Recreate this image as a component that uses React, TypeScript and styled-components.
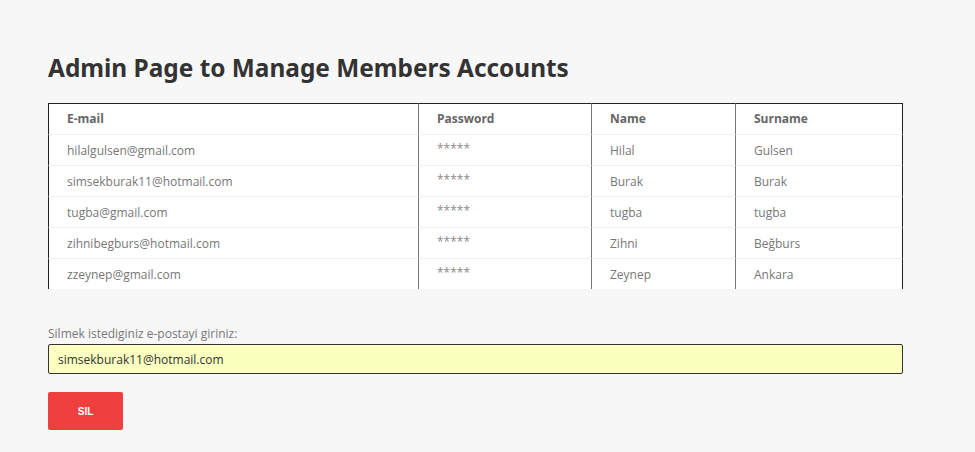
import React, { useState } from "react";
import styled, { createGlobalStyle } from "styled-components";

const GlobalStyle = createGlobalStyle`
  html, body {
    margin: 0;
    padding: 0;
    background: #f7f7f7;
    font-family: "Open Sans", "Noto Sans", sans-serif;
  }
`;

const members = [
  { email: "hilalgulsen@gmail.com", name: "Hilal", surname: "Gulsen" },
  { email: "simsekburak11@hotmail.com", name: "Burak", surname: "Burak" },
  { email: "tugba@gmail.com", name: "tugba", surname: "tugba" },
  { email: "zihnibegburs@hotmail.com", name: "Zihni", surname: "Beğburs" },
  { email: "zzeynep@gmail.com", name: "Zeynep", surname: "Ankara" },
];

function App() {
  const [email, setEmail] = useState("simsekburak11@hotmail.com");

  return (
    <>
      <GlobalStyle />
      <Page>
        <Title>Admin Page to Manage Members Accounts</Title>
        <Table>
          <colgroup>
            <col style={{ width: 371 }} />
            <col style={{ width: 173 }} />
            <col style={{ width: 144 }} />
            <col style={{ width: 167 }} />
          </colgroup>
          <thead>
            <tr>
              <Th>E-mail</Th>
              <Th>Password</Th>
              <Th>Name</Th>
              <Th>Surname</Th>
            </tr>
          </thead>
          <tbody>
            {members.map((m) => (
              <tr key={m.email}>
                <Td>{m.email}</Td>
                <Td $stars>*****</Td>
                <Td>{m.name}</Td>
                <Td>{m.surname}</Td>
              </tr>
            ))}
          </tbody>
        </Table>

        <Form onSubmit={(e) => e.preventDefault()}>
          <Label htmlFor="delete-email">Silmek istediginiz e-postayi giriniz:</Label>
          <EmailInput
            id="delete-email"
            type="text"
            autoFocus
            value={email}
            onChange={(e) => setEmail(e.target.value)}
          />
          <DeleteButton type="submit">SIL</DeleteButton>
        </Form>
      </Page>
    </>
  );
}

export default App;

const Page = styled.div`
  padding: 52px 72px 0 48px;
  width: 855px;
`;

const Title = styled.h1`
  margin: 0 0 19px;
  font-family: "Noto Sans", sans-serif;
  font-weight: 700;
  font-size: 24.4px;
  line-height: 32px;
  color: #333;
`;

const Table = styled.table`
  width: 855px;
  border-collapse: separate;
  border-spacing: 0;
  background: #fff;
  table-layout: fixed;
`;

const Th = styled.th`
  height: 30px;
  padding: 0 0 0 18px;
  text-align: left;
  vertical-align: middle;
  font-size: 12px;
  line-height: 16px;
  font-weight: 700;
  color: #666;
  border-top: 1px solid #222;
  border-right: 1px solid #777;
  border-bottom: 1px solid #f0f0f0;

  &:first-child {
    border-left: 1px solid #222;
  }
  &:last-child {
    border-right: 1px solid #222;
  }
`;

const Td = styled.td<{ $stars?: boolean }>`
  height: ${(p) => (p.$stars ? "26px" : "30px")};
  padding: ${(p) => (p.$stars ? "0 0 4px 18px" : "0 0 0 18px")};
  font-size: 12px;
  line-height: 17px;
  color: ${(p) => (p.$stars ? "#8a8a8a" : "#777")};
  border-right: 1px solid #777;
  border-bottom: 1px solid #f0f0f0;
  white-space: nowrap;

  &:first-child {
    border-left: 1px solid #222;
  }
  &:last-child {
    border-right: 1px solid #222;
  }
  tr:last-child > & {
    border-bottom: none;
  }
`;

const Form = styled.form`
  display: flex;
  flex-direction: column;
  align-items: flex-start;
  margin-top: 37px;
`;

const Label = styled.label`
  font-size: 12px;
  line-height: 16px;
  color: #777;
  margin-bottom: 2px;
`;

const EmailInput = styled.input`
  box-sizing: border-box;
  width: 855px;
  height: 30px;
  padding: 0 9px;
  background: #fbffc0;
  border: 1px solid #333;
  border-radius: 2px;
  font-family: "Open Sans", sans-serif;
  font-size: 12px;
  color: #333;
  outline: none;
`;

const DeleteButton = styled.button`
  margin-top: 18px;
  width: 75px;
  height: 38px;
  background: #ee3e3e;
  border: none;
  border-radius: 2px;
  color: #fff;
  font-family: "Liberation Sans", Arial, sans-serif;
  font-weight: 700;
  font-size: 10px;
  cursor: pointer;
`;
